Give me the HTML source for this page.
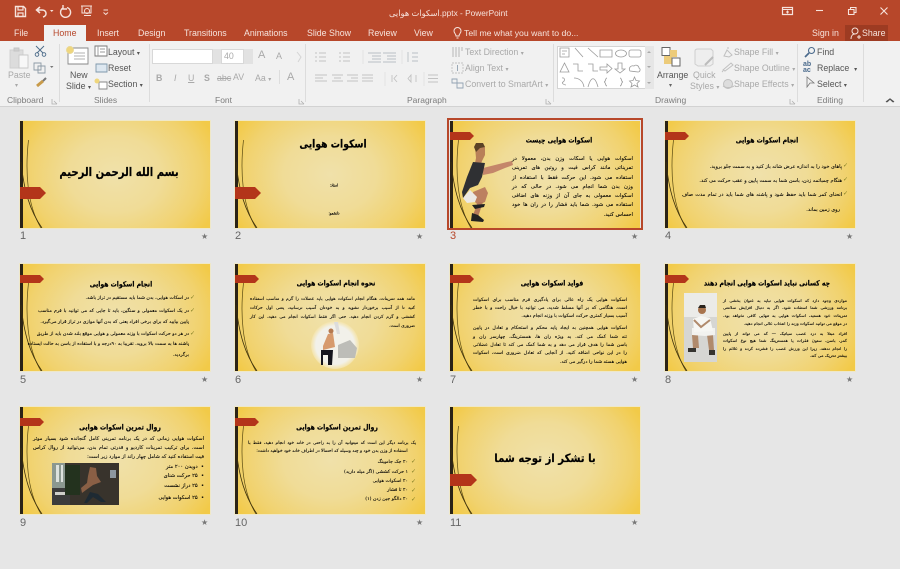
<!DOCTYPE html>
<html lang="en"><head><meta charset="utf-8"><title>PowerPoint</title>
<style>
html,body{margin:0;padding:0}
body{width:900px;height:569px;overflow:hidden;background:#e6e6e6;position:relative;font-family:"Liberation Sans",sans-serif}
#p{position:absolute;left:0;top:0;width:900px;height:569px;filter:blur(.35px)}
.a{position:absolute}
.t{position:absolute;white-space:nowrap;font-size:8.800px;line-height:11px;color:#7c7c7c}
.w{color:#f6e3dc}
.g{color:#a9a9a9}
.k{color:#555}
.i{position:absolute;overflow:visible}
.s{position:absolute;width:190px;height:107px;overflow:hidden;background:radial-gradient(ellipse 58% 84% at 50% 50%,#f0e1aa 0,#f0dc97 42%,#f1d26e 78%,#f2ca48 100%);box-shadow:0 0 0 1px #efe8c8}
.s svg.b{position:absolute;left:0;top:0}
.h,.l{position:absolute;direction:rtl;white-space:nowrap;font-family:"DejaVu Sans",sans-serif;color:#000}
.h{font-weight:bold;text-align:center;transform:translate(-50%,-50%) scaleX(.84);-webkit-text-stroke:.2px #000}
.l{font-size:4.700px;line-height:6px;text-align:justify;text-align-last:justify;-webkit-text-stroke:.1px #000}
.r{text-align-last:right;text-align:right}
.c{text-align-last:center;text-align:center}
.n{position:absolute;font-size:11px;line-height:13px;color:#666}
.st{position:absolute;font-size:8px;line-height:10px;color:#777;font-family:"DejaVu Sans",sans-serif}
.ck{position:absolute;font-family:"DejaVu Sans",sans-serif;font-size:6px;line-height:6px;color:#7d7a20}
</style></head><body><div id="p">
<!-- title bar -->
<div class="a" style="left:0;top:0;width:900px;height:41px;background:#b7472a"></div>
<div class="a" style="left:44px;top:25px;width:42px;height:16px;background:#f1f1f1"></div>
<div class="a" style="left:845px;top:25px;width:43px;height:16px;background:#9d3b22"></div>
<!-- QAT -->
<svg class="i" style="left:0;top:0" width="120" height="20" fill="none" stroke="#f6e3dc" stroke-width="1.200">
<path d="M15.500 6.500h8l2 2v8h-10z" stroke-width="1.400"/><path d="M18 7v3h5V7M18 16v-3h5v3"/>
<path d="M40 7l-3.500 3 3.500 3M37 10h5c3 0 4 2 4 3.500s-1 3-3 3.500" stroke-width="1.500"/><path d="M50 10h3.500l-1.750 2z" fill="#f6e3dc" stroke="none"/>
<path d="M67 7.500a5 5 0 1 1-4 .5M63 5v4h4" stroke-width="1.400"/>
<path d="M81 6h11M82 6v7h9V6M84 15.500h7" stroke-width="1"/><circle cx="87" cy="11" r="2.500" stroke-width="1"/>
<path d="M103.500 10h4.500M103.500 12.500l2.250 2 2.250-2" stroke-width="1"/>
</svg>
<div class="t w" style="left:389px;top:8px;font-size:8.300px;font-family:'Liberation Sans','DejaVu Sans',sans-serif">اسکوات هوایی.pptx - PowerPoint</div>
<!-- window controls -->
<svg class="i" style="left:780px;top:0" width="120" height="20" fill="none" stroke="#f6e3dc" stroke-width="1.100">
<path d="M2.500 7.500h10v7h-10z" stroke-width="1.200"/><path d="M2.500 9.500h10M7.500 10.500v3M6 12h3"/>
<path d="M36 10.500h7"/><path d="M68.500 9.500h5.500v5h-5.500zM70.500 9.500v-2h5.500v5h-2"/><path d="M100.500 7.500l7 7M107.500 7.500l-7 7"/>
</svg>
<!-- tabs -->
<div class="t w" style="left:14px;top:28px">File</div>
<div class="t" style="left:53px;top:28px;color:#b7472a">Home</div>
<div class="t w" style="left:97px;top:28px">Insert</div>
<div class="t w" style="left:138px;top:28px">Design</div>
<div class="t w" style="left:184px;top:28px">Transitions</div>
<div class="t w" style="left:244px;top:28px">Animations</div>
<div class="t w" style="left:307px;top:28px">Slide Show</div>
<div class="t w" style="left:368px;top:28px">Review</div>
<div class="t w" style="left:414px;top:28px">View</div>
<svg class="i" style="left:452px;top:27px" width="12" height="13" fill="none" stroke="#f6e3dc"><path d="M4 9c0-2-2-3-2-5a3.500 3.500 0 0 1 7 0c0 2-2 3-2 5zM4.500 11h2"/></svg>
<div class="t w" style="left:464px;top:28px;font-size:8.700px">Tell me what you want to do...</div>
<div class="t w" style="left:812px;top:28px">Sign in</div>
<svg class="i" style="left:850px;top:27px" width="12" height="13" fill="none" stroke="#f6e3dc" stroke-width="1"><circle cx="5" cy="4" r="3"/><path d="M1 12c0-3 1.500-5 4-5M7 10h4M9 8v4"/></svg>
<div class="t w" style="left:862px;top:28px">Share</div>
<!-- ribbon -->
<div class="a" style="left:0;top:41px;width:900px;height:65px;background:#f1f1f1;border-bottom:1px solid #d2d2d2"></div>
<div class="a" style="left:59px;top:44px;width:1px;height:58px;background:#dcdcdc"></div>
<div class="a" style="left:149px;top:44px;width:1px;height:58px;background:#dcdcdc"></div>
<div class="a" style="left:305px;top:44px;width:1px;height:58px;background:#dcdcdc"></div>
<div class="a" style="left:553px;top:44px;width:1px;height:58px;background:#dcdcdc"></div>
<div class="a" style="left:797px;top:44px;width:1px;height:58px;background:#dcdcdc"></div>
<div class="a" style="left:863px;top:44px;width:1px;height:58px;background:#dcdcdc"></div>
<!-- clipboard + slides icons -->
<svg class="i" style="left:0;top:0" width="150" height="95" fill="none" stroke="#888" stroke-width=".9">
<path d="M10 50h13v18H10z" fill="#dcdcdc" stroke="#cfcfcf"/><path d="M14 48h5v3h-5z" fill="#cfcfcf" stroke="#c4c4c4"/><path d="M19 55h9v13h-9z" fill="#f7f7f7" stroke="#c8c8c8"/>
<path d="M36 46l7 7M44 46l-7 7" stroke="#4a6a88"/><circle cx="37" cy="54.500" r="1.800" stroke="#4a6a88"/><circle cx="44" cy="54.500" r="1.800" stroke="#4a6a88"/>
<path d="M34 63h7v7h-7zM38 66h7v7h-7z" stroke="#8d9aa6"/><path d="M50 66h3.500l-1.750 2z" fill="#777" stroke="none"/>
<path d="M43 81l-6 5" stroke="#c89b4a" stroke-width="3"/><path d="M43 81l3-3" stroke="#777" stroke-width="2"/>
<path d="M68 48h20v16H68z" fill="#fff" stroke="#888"/><path d="M74 53h11M74 56h11M74 59h11" stroke="#b2b2b2"/><circle cx="70" cy="50" r="3.500" fill="#efd67c" stroke="#e9d793"/>
<path d="M95 46h12v10H95z" fill="#fff" stroke="#777"/><path d="M98 46v10M100 49h5M100 52h5" stroke="#999"/>
<path d="M96 64h11v8H96z" fill="#dde7f0" stroke="#7f98ab"/>
<path d="M99 82h8v7h-8z" fill="#fff" stroke="#888"/><circle cx="97" cy="81" r="2.500" fill="#efd67c" stroke="none"/>
</svg>
<div class="t g" style="left:8px;top:70px">Paste</div>
<div class="t g" style="left:15px;top:81px;font-size:6px">▾</div>
<div class="t k" style="left:70px;top:70px">New</div>
<div class="t k" style="left:66px;top:81px">Slide <span style="font-size:6px">▾</span></div>
<div class="t k" style="left:108px;top:47px">Layout <span style="font-size:6px">▾</span></div>
<div class="t k" style="left:108px;top:63px">Reset</div>
<div class="t k" style="left:108px;top:79px">Section <span style="font-size:6px">▾</span></div>
<div class="t" style="left:7px;top:95px;font-size:8.500px">Clipboard</div>
<div class="t" style="left:94px;top:95px;font-size:8.500px">Slides</div>
<div class="t" style="left:215px;top:95px;font-size:8.500px">Font</div>
<div class="t" style="left:407px;top:95px;font-size:8.500px">Paragraph</div>
<div class="t" style="left:655px;top:95px;font-size:8.500px">Drawing</div>
<div class="t" style="left:817px;top:95px;font-size:8.500px">Editing</div>
<svg class="i" style="left:0;top:95px" width="900" height="11" fill="none" stroke="#b0b0b0" stroke-width=".8">
<path d="M52 4v5h5M54 6l3 3M299 4v5h5M301 6l3 3M546 4v5h5M548 6l3 3M790 4v5h5M792 6l3 3"/>
<path d="M887 7l3-3 3 3" stroke="#555" stroke-width="1.100"/>
</svg>
<!-- font -->
<div class="a" style="left:152px;top:49px;width:61px;height:15px;background:#fff;border:1px solid #d8d8d8;box-sizing:border-box"></div>
<div class="a" style="left:213px;top:49px;width:8px;height:15px;background:#e2e2e2"></div>
<div class="a" style="left:221px;top:49px;width:23px;height:15px;background:#fff;border:1px solid #d8d8d8;box-sizing:border-box"></div>
<div class="a" style="left:244px;top:49px;width:9px;height:15px;background:#e2e2e2"></div>
<div class="t g" style="left:224px;top:51px">40</div>
<div class="t g" style="left:258px;top:50px;font-size:11px">A</div>
<div class="t g" style="left:276px;top:51px;font-size:9px">A</div>
<div class="t g" style="left:156px;top:73px;font-weight:bold">B</div>
<div class="t g" style="left:174px;top:73px;font-style:italic">I</div>
<div class="t g" style="left:188px;top:73px;text-decoration:underline">U</div>
<div class="t g" style="left:204px;top:73px;font-weight:bold">S</div>
<div class="t g" style="left:217px;top:73px;text-decoration:line-through">abc</div>
<div class="t g" style="left:233px;top:72px">AV</div>
<div class="t g" style="left:255px;top:73px">Aa <span style="font-size:6px">▾</span></div>
<div class="t g" style="left:287px;top:72px;font-size:11px">A</div>
<div class="a" style="left:279px;top:70px;width:1px;height:14px;background:#ddd"></div>
<svg class="i" style="left:296px;top:50px" width="8" height="14" fill="none" stroke="#d4d4d4"><path d="M1 2l4 5-3 5"/></svg>
<!-- paragraph icons -->
<svg class="i" style="left:300px;top:0" width="170" height="95" fill="none" stroke="#c2c2c2" stroke-width=".9">
<path d="M15 53h2M15 57h2M15 61h2M19 53h7M19 57h7M19 61h7M39 53h2M39 57h2M39 61h2M43 53h7M43 57h7M43 61h7"/>
<path d="M68 53h13M72 56h9M72 59h9M68 62h13M83 53h13M87 56h9M87 59h9M83 62h13M112 53h6M112 57h6M112 61h6M108 52v10" stroke="#b9c0c5"/>
<path d="M15 75h12M15 78h8M15 81h12M32 75h11M34 78h7M32 81h11M47 75h11M51 78h7M47 81h11M62 75h11M62 78h11M62 81h11"/>
<path d="M92 75v7M97 75l-3 3.500 3 3.500M108 78.500l3-3.500v7zM116 75v7M128 75h10M128 78.500h10M128 82h10"/>
<path d="M63 50v14M102 50v14M85 72v14M124 72v14" stroke="#e0e0e0"/>
<path d="M153 47v10M156 47v10M159 47v10M162 47v4" stroke="#b0b0b0"/>
<path d="M152 63h11v10h-11z" stroke-dasharray="2 1"/><path d="M157.500 65v6" stroke="#8fa0b0"/>
<path d="M152 79h5v4h-5zM157 83h6v5h-6z" stroke="#93a3b3"/>
</svg>
<div class="t g" style="left:465px;top:47px">Text Direction <span style="font-size:6px">▾</span></div>
<div class="t g" style="left:465px;top:63px">Align Text <span style="font-size:6px">▾</span></div>
<div class="t g" style="left:465px;top:79px">Convert to SmartArt <span style="font-size:6px">▾</span></div>
<!-- shapes gallery -->
<div class="a" style="left:557px;top:46px;width:97px;height:43px;background:#fff;border:1px solid #d4d4d4;box-sizing:border-box"></div>
<div class="a" style="left:645px;top:46px;width:9px;height:43px;background:#e6e6e6"></div>
<svg class="i" style="left:557px;top:46px" width="100" height="44" fill="none" stroke="#9a9a9a" stroke-width=".8">
<path d="M3 2h9v9H3zM5 5h5M5 8h3M18 2l8 9M31 2l10 9M43 4h12v7H43z"/><ellipse cx="64" cy="7.500" rx="5.500" ry="3.500"/><rect x="72" y="4" width="12" height="7" rx="2"/>
<path d="M3 26l4.500-9 4.500 9zM16 18h5v7h5M31 18h5v7h5M43 21h7v-3l5 4.500-5 4.500v-3h-7zM61 17v6h-3l5 4 5-4h-3v-6zM73 25c-2-3 1-6 4-5 2-2 5 0 5 2 2 1 1 4-1 4z"/>
<path d="M5 32c3-1 3 3 1 4s1 3 3 3M17 32c5 0 9 3 10 9M31 41c3-11 7-11 10 0M50 32c-2 0-1 4-3 4 2 0 1 4 3 4M63 32c2 0 1 4 3 4-2 0-1 4-3 4M77.500 31l1.500 3.500 3.500.5-2.500 2.500 1 3.500-3.500-2-3.500 2 1-3.500-2.500-2.500 3.500-.5z"/>
<path d="M92 5l-2 2h4zM90 20h4l-2 2zM90 36h4l-2 2z" fill="#aaa" stroke="none"/>
</svg>
<!-- arrange -->
<svg class="i" style="left:660px;top:46px" width="24" height="24"><rect x="2" y="1.500" width="8" height="8" fill="#fff" stroke="#666"/><rect x="10" y="4" width="7" height="7" fill="#eccb7a"/><rect x="4" y="10" width="8" height="8" fill="#eccb7a"/><rect x="12" y="12" width="8" height="8" fill="#fff" stroke="#666"/></svg>
<div class="t k" style="left:657px;top:70px">Arrange</div>
<div class="t" style="left:669px;top:81px;font-size:6px;color:#666">▾</div>
<svg class="i" style="left:693px;top:47px" width="24" height="22" fill="none" stroke="#cfcfcf"><path d="M2 4c0-2 2-2 3-2h13l2 2v13l-3 2H5l-3-2z" fill="#eee"/><path d="M20 10l-8 8" stroke="#bcbcbc" stroke-width="2"/></svg>
<div class="t g" style="left:693px;top:70px">Quick</div>
<div class="t g" style="left:690px;top:81px">Styles <span style="font-size:6px">▾</span></div>
<svg class="i" style="left:721px;top:45px" width="14" height="46" fill="none" stroke="#c0c0c0"><path d="M3 11l3-6 5 5-3 2zM6 3h2"/><path d="M2 25l8-7 2 2-8 6zM2 26l-1 1"/><circle cx="7" cy="39" r="4.500" fill="#ddd"/><path d="M2 41c3 2 8 2 11 0"/></svg>
<div class="t g" style="left:734px;top:47px">Shape Fill <span style="font-size:6px">▾</span></div>
<div class="t g" style="left:734px;top:63px">Shape Outline <span style="font-size:6px">▾</span></div>
<div class="t g" style="left:734px;top:79px">Shape Effects <span style="font-size:6px">▾</span></div>
<!-- editing -->
<svg class="i" style="left:803px;top:46px" width="14" height="44" fill="none" stroke="#4a6a8c" stroke-width="1.100"><circle cx="8.500" cy="4.500" r="3"/><path d="M6 7l-4 4" stroke-width="1.700"/><path d="M4 41V31l7 6H7z" stroke="#777" stroke-width=".8"/></svg>
<div class="t" style="left:803px;top:62px;font-size:7px;line-height:6px;color:#4a6a8c;font-weight:bold">ab<br>ac</div>
<div class="t k" style="left:817px;top:47px">Find</div>
<div class="t k" style="left:817px;top:63px">Replace &nbsp;<span style="font-size:6px">▾</span></div>
<div class="t k" style="left:817px;top:79px">Select <span style="font-size:6px">▾</span></div>
<svg class="i" style="left:885px;top:97px" width="10" height="7" fill="none" stroke="#555" stroke-width="1.200"><path d="M1 5l4-3 4 3"/></svg>

<svg width="0" height="0" class="a"><defs>
<g id="deco" fill="none"><rect width="3" height="107" fill="#2b2316" stroke="none"/>
<path d="M8.500 19C5 50 7 84 21 107" stroke="#5a4a10" stroke-width=".7"/><path d="M1 41C4 70 10 90 22 107" stroke="#3c2f0a" stroke-width=".8"/></g>
</defs></svg>

<!-- selection slide 3 -->
<div class="a" style="left:447px;top:118px;width:196px;height:112px;border:2px solid #b7472a;box-sizing:border-box"></div>

<!-- 1 -->
<div class="s" style="left:20px;top:121px"><svg class="b" width="190" height="107"><use href="#deco"/><path d="M0 66H20l6 6-6 6H0z" fill="#b3351a"/></svg>
<div class="h" style="left:99px;top:51px;font-size:12px">بسم الله الرحمن الرحیم</div></div>
<!-- 2 -->
<div class="s" style="left:235px;top:121px"><svg class="b" width="190" height="107"><use href="#deco"/><path d="M0 66H20l6 6-6 6H0z" fill="#b3351a"/></svg>
<div class="h" style="left:98px;top:23px;font-size:11px">اسکوات هوایی</div>
<div class="h" style="left:99px;top:64px;font-size:3.800px;font-weight:normal">استاد:</div>
<div class="h" style="left:99px;top:92px;font-size:3.800px;font-weight:normal">دانشجو:</div></div>
<!-- 3 -->
<div class="s" style="left:450px;top:121px;box-shadow:none"><svg class="b" width="190" height="107"><use href="#deco"/><path d="M0 11H20l4 4-4 4H0z" fill="#b3351a"/>
<path d="M25 26h10v8l-3 6-1 3-6-1 1-5z" fill="#b98058"/><path d="M24 26l2-4h7l2 4-5 1-4 4z" fill="#5a4226"/>
<path d="M33 47L57 41l5-1 1 4-8 3-12 5-10 2z" fill="#c4866a"/>
<path d="M23 71l12-5 3 6-3 9-7 3-5-5z" fill="#bd8060"/>
<path d="M28 81h5l-5 15-5-2z" fill="#b57a5a"/>
<path d="M13 77l7-8 7 7-2 5-8 1z" fill="#ece9e4"/>
<path d="M23 41l12 1-3 14-4 8-8 3-7 10-1-6 5-15z" fill="#2f3033"/>
<path d="M22 84l13-1-1 3-9 2zM22 92l6 2 6 5-1 2-12-1z" fill="#222"/>
</svg>
<div class="h" style="left:109px;top:19px;font-size:7.300px">اسکوات هوایی چیست</div>
<div class="l" style="left:62px;width:121px;top:35px;font-size:5.300px">اسکوات هوایی یا اسکات وزن بدن، معمولا در</div>
<div class="l" style="left:62px;width:121px;top:44px;font-size:5.300px">تمریناتی مانند کراس فیت و روتین های تمرینی</div>
<div class="l" style="left:62px;width:121px;top:54px;font-size:5.300px">استفاده می شود. این حرکت فقط با استفاده از</div>
<div class="l" style="left:62px;width:121px;top:63px;font-size:5.300px">وزن بدن شما انجام می شود. در حالی که در</div>
<div class="l" style="left:62px;width:121px;top:72px;font-size:5.300px">اسکوات معمولی به جای آن از وزنه های اضافی</div>
<div class="l" style="left:62px;width:121px;top:81px;font-size:5.300px">استفاده می شود. شما باید فشار را در ران ها خود</div>
<div class="l r" style="left:62px;width:121px;top:91px;font-size:5.300px">احساس کنید.</div></div>
<!-- 4 -->
<div class="s" style="left:665px;top:121px"><svg class="b" width="190" height="107"><use href="#deco"/><path d="M0 11H20l4 4-4 4H0z" fill="#b3351a"/></svg>
<div class="h" style="left:102px;top:19px;font-size:7.300px">انجام اسکوات هوایی</div>
<div class="ck" style="left:178px;top:42px">✓</div><div class="l r" style="left:20px;width:157px;top:43px;font-size:5px">پاهای خود را به اندازه عرض شانه باز کنید و به سمت جلو بروید.</div>
<div class="ck" style="left:178px;top:56px">✓</div><div class="l r" style="left:20px;width:157px;top:57px;font-size:5px">هنگام چمباتمه زدن، باسن شما به سمت پایین و عقب حرکت می کند.</div>
<div class="ck" style="left:178px;top:70px">✓</div><div class="l" style="left:17px;width:160px;top:71px;font-size:5px">انحنای کمر شما باید حفظ شود و پاشنه های شما باید در تمام مدت صاف</div>
<div class="l r" style="left:30px;width:145px;top:86px;font-size:5px">روی زمین بماند.</div></div>
<!-- 5 -->
<div class="s" style="left:20px;top:264px"><svg class="b" width="190" height="107"><use href="#deco"/><path d="M0 11H20l4 4-4 4H0z" fill="#b3351a"/></svg>
<div class="h" style="left:101px;top:20px;font-size:7.300px">انجام اسکوات هوایی</div>
<div class="ck" style="left:170px;top:31px">✓</div><div class="l r" style="left:18px;width:151px;top:32px;font-size:4.700px">در اسکات هوایی، بدن شما باید مستقیم در تراز باشد.</div>
<div class="ck" style="left:170px;top:44px">✓</div><div class="l" style="left:18px;width:151px;top:45px;font-size:4.700px">در یک اسکوات معمولی و سنگین، باید تا جایی که می توانید با فرم مناسب</div>
<div class="l r" style="left:18px;width:151px;top:56px;font-size:4.700px">پایین بیایید که برای برخی افراد یعنی که بدن آنها موازی در تراز قرار می‌گیرد.</div>
<div class="ck" style="left:170px;top:67px">✓</div><div class="l" style="left:18px;width:151px;top:68px;font-size:4.700px">در هر دو حرکت اسکوات با وزنه معمولی و هوایی موقع بلند شدن باید از طریق</div>
<div class="l" style="left:18px;width:151px;top:78px;font-size:4.700px">پاشنه ها به سمت بالا بروید. تقریبا به ۹۰درجه و با استفاده از باسن به حالت ایستاده</div>
<div class="l r" style="left:18px;width:151px;top:89px;font-size:4.700px">برگردید.</div></div>
<!-- 6 -->
<div class="s" style="left:235px;top:264px"><svg class="b" width="190" height="107"><use href="#deco"/><path d="M0 11H20l4 4-4 4H0z" fill="#b3351a"/>
<defs><radialGradient id="wc"><stop offset=".8" stop-color="#f2f1ea"/><stop offset="1" stop-color="#f4e3a8"/></radialGradient></defs>
<circle cx="100" cy="81" r="24" fill="url(#wc)"/><path d="M99 58h4l2 12h-3z" fill="#dcdcdc"/><path d="M103 81l12-5 7 8-2 10h-17z" fill="#bdbdb8"/>
<path d="M93 70l5-1 2 14-12 3v-4z" fill="#d79a6c"/><circle cx="96" cy="67" r="2.500" fill="#b5794f"/>
<path d="M86 86h12l-1 15h-4V91h-5v10h-2z" fill="#15151d"/>
</svg>
<div class="h" style="left:101px;top:19px;font-size:7.300px">نحوه انجام اسکوات هوایی</div>
<div class="l" style="left:15px;width:165px;top:33px;font-size:4.400px">مانند همه تمرینات، هنگام انجام اسکوات هوایی باید عضلات را گرم و مناسب استفاده</div>
<div class="l" style="left:15px;width:165px;top:42px;font-size:4.400px">کنید تا از آسیب برخوردار نشوید و به خودتان آسیب نرسانید، یعنی اول حرکات</div>
<div class="l" style="left:15px;width:165px;top:51px;font-size:4.400px">کششی و گرم کردن انجام دهید. حتی اگر فقط اسکوات انجام می دهید، این کار</div>
<div class="l r" style="left:15px;width:165px;top:60px;font-size:4.400px">ضروری است.</div></div>
<!-- 7 -->
<div class="s" style="left:450px;top:264px"><svg class="b" width="190" height="107"><use href="#deco"/><path d="M0 11H20l4 4-4 4H0z" fill="#b3351a"/></svg>
<div class="h" style="left:102px;top:19px;font-size:7.300px">فواید اسکوات هوایی</div>
<div class="l" style="left:23px;width:154px;top:34px;font-size:4.700px">اسکوات هوایی یک راه عالی برای یادگیری فرم مناسب برای اسکوات</div>
<div class="l" style="left:23px;width:154px;top:42px;font-size:4.700px">است. هنگامی که بر آنها مسلط شدید، می توانید با خیال راحت و با خطر</div>
<div class="l r" style="left:23px;width:154px;top:50px;font-size:4.700px">آسیب بسیار کمتری حرکت اسکوات با وزنه انجام دهید.</div>
<div class="l" style="left:23px;width:154px;top:62px;font-size:4.700px">اسکوات هوایی همچنین به ایجاد پایه محکم و استحکام و تعادل در پایین</div>
<div class="l" style="left:23px;width:154px;top:71px;font-size:4.700px">تنه شما کمک می کند. به ویژه ران ها، همسترینگ، چهارسر ران و</div>
<div class="l" style="left:23px;width:154px;top:79px;font-size:4.700px">باسن شما را هدف قرار می دهد و به شما کمک می کند تا تعادل عضلانی</div>
<div class="l" style="left:23px;width:154px;top:87px;font-size:4.700px">را در این نواحی اضافه کنید. از آنجایی که تعادل ضروری است، اسکوات</div>
<div class="l r" style="left:23px;width:154px;top:96px;font-size:4.700px">هوایی هسته شما را درگیر می کند.</div></div>
<!-- 8 -->
<div class="s" style="left:665px;top:264px"><svg class="b" width="190" height="107"><use href="#deco"/><path d="M0 11H20l4 4-4 4H0z" fill="#b3351a"/>
<rect x="19" y="29" width="33" height="69" fill="#d6d6d3"/><path d="M19 29h33v24H19z" fill="#ebebe8"/>
<path d="M27 71h6l1 13h-6zM42 71h6l1 15h-5z" fill="#b08a6c"/><path d="M23 84h8v4h-8zM44 86h6v5h-6z" fill="#35332f"/>
<path d="M27 64l23 0 0 7-10 1-13-1z" fill="#f2f2ef"/>
<path d="M28 55l8-3 9 2 3 13-19 1z" fill="#f6f6f3"/><path d="M29 56l7 7 9-7" stroke="#b08a6c" stroke-width="2" fill="none"/>
<circle cx="37" cy="46" r="4" fill="#a8744e"/><path d="M33 44l2-3h5l1 3z" fill="#2a241e"/></svg>
<div class="h" style="left:102px;top:19px;font-size:7.300px">چه کسانی نباید اسکوات هوایی انجام دهند</div>
<div class="l" style="left:58px;width:124px;top:34px;font-size:4.200px">مواردی وجود دارد که اسکوات هوایی نباید به عنوان بخشی از</div>
<div class="l" style="left:58px;width:124px;top:41px;font-size:4.200px">برنامه ورزشی شما استفاده شود. اگر به دنبال افزایش سلامتی</div>
<div class="l" style="left:58px;width:124px;top:49px;font-size:4.200px">تمرینات خود هستید، اسکوات هوایی به تنهایی کافی نخواهد بود.</div>
<div class="l r" style="left:58px;width:124px;top:57px;font-size:4.200px">در موقع می توانید اسکوات وزنه را انتخاب عالی انجام دهید.</div>
<div class="l" style="left:58px;width:124px;top:67px;font-size:4.200px">افراد مبتلا به درد عصب سیاتیک — که می تواند از پایین</div>
<div class="l" style="left:58px;width:124px;top:74px;font-size:4.200px">کمر، باسن، ستون فقرات یا همسترینگ شما هیچ نوع اسکوات</div>
<div class="l" style="left:58px;width:124px;top:82px;font-size:4.200px">را انجام ندهند. زیرا این ورزش عصب را فشرده کرده و علائم را</div>
<div class="l r" style="left:58px;width:124px;top:89px;font-size:4.200px">بیشتر تحریک می کند.</div></div>
<!-- 9 -->
<div class="s" style="left:20px;top:407px"><svg class="b" width="190" height="107"><use href="#deco"/><path d="M0 11H20l4 4-4 4H0z" fill="#b3351a"/>
<rect x="32" y="56" width="67" height="42" fill="#38332c"/><path d="M32 56h13v25H32z" fill="#8b9890"/><path d="M36 58h3v17h-3zM41 58h2v17h-2z" fill="#dde2de"/><path d="M32 81h18v17H32z" fill="#3c3c3c"/><path d="M35 85h15l-2 3H35z" fill="#cfcfca"/><path d="M45 58h15v30H45z" fill="#23321e"/><path d="M90 63h6v8h-6z" fill="#8d97a0"/><path d="M70 60l6 1 1 8 4 6-8 3-7 5-4 3-1-5 6-5 1-7z" fill="#8a5f45"/><path d="M70 85l8 2 8 8h-5l-8-5-6 6h-3z" fill="#1e2a33"/></svg>
<div class="h" style="left:100px;top:20px;font-size:7.300px">روال تمرین اسکوات هوایی</div>
<div class="l" style="left:13px;width:171px;top:29px;font-size:5px">اسکوات هوایی زمانی که در یک برنامه تمرینی کامل گنجانده شود بسیار موثر</div>
<div class="l" style="left:13px;width:171px;top:38px;font-size:5px">است. برای ترکیب تمرینات کاردیو و قدرتی تمام بدن، می‌توانید از روال کراس</div>
<div class="l r" style="left:13px;width:171px;top:47px;font-size:5px">فیت استفاده کنید که شامل چهار راند از موارد زیر است:</div>
<div class="l r" style="left:100px;width:84px;top:57px;font-size:5.200px">• &nbsp;دویدن ۲۰۰ متر</div>
<div class="l r" style="left:100px;width:84px;top:66px;font-size:5.200px">• &nbsp;۲۵ حرکت شنای</div>
<div class="l r" style="left:100px;width:84px;top:76px;font-size:5.200px">• &nbsp;۲۵ دراز نشست</div>
<div class="l r" style="left:100px;width:84px;top:88px;font-size:5.200px">• &nbsp;۲۵ اسکوات هوایی</div></div>
<!-- 10 -->
<div class="s" style="left:235px;top:407px"><svg class="b" width="190" height="107"><use href="#deco"/><path d="M0 11H20l4 4-4 4H0z" fill="#b3351a"/></svg>
<div class="h" style="left:102px;top:20px;font-size:7.300px">روال تمرین اسکوات هوایی</div>
<div class="l" style="left:13px;width:168px;top:34px;font-size:4.400px">یک برنامه دیگر این است که میتوانید آن را به راحتی در خانه خود انجام دهید، فقط با</div>
<div class="l c" style="left:13px;width:168px;top:42px;font-size:4.400px">استفاده از وزن بدن خود و چند وسیله که احتمالا در اطراف خانه خود خواهید داشت:</div>
<div class="ck" style="left:176px;top:52px">✓</div><div class="l r" style="left:40px;width:133px;top:53px;font-size:4.700px">۲۰ جک جامپینگ</div>
<div class="ck" style="left:176px;top:62px">✓</div><div class="l r" style="left:40px;width:133px;top:63px;font-size:4.700px">۱ حرکت کششی (اگر میله دارید)</div>
<div class="ck" style="left:176px;top:72px">✓</div><div class="l r" style="left:40px;width:133px;top:72px;font-size:4.700px">۲۰ اسکوات هوایی</div>
<div class="ck" style="left:176px;top:81px">✓</div><div class="l r" style="left:40px;width:133px;top:81px;font-size:4.700px">۲۰ تا فشار</div>
<div class="ck" style="left:176px;top:90px">✓</div><div class="l r" style="left:40px;width:133px;top:90px;font-size:4.700px">۲۰ دالگو جین زدن (۱)</div></div>
<!-- 11 -->
<div class="s" style="left:450px;top:407px"><svg class="b" width="190" height="107"><use href="#deco"/><path d="M0 67H21l6 6-6 6H0z" fill="#b3351a"/></svg>
<div class="h" style="left:95px;top:51px;font-size:11.500px;transform:translate(-50%,-50%) scaleX(.88)">با تشکر از توجه شما</div></div>

<!-- numbers -->
<div class="n" style="left:20px;top:230px">1</div><div class="st" style="left:201px;top:232px">★</div>
<div class="n" style="left:235px;top:230px">2</div><div class="st" style="left:416px;top:232px">★</div>
<div class="n" style="left:450px;top:230px;color:#b7472a">3</div><div class="st" style="left:631px;top:232px">★</div>
<div class="n" style="left:665px;top:230px">4</div><div class="st" style="left:846px;top:232px">★</div>
<div class="n" style="left:20px;top:374px">5</div><div class="st" style="left:201px;top:375px">★</div>
<div class="n" style="left:235px;top:374px">6</div><div class="st" style="left:416px;top:375px">★</div>
<div class="n" style="left:450px;top:374px">7</div><div class="st" style="left:631px;top:375px">★</div>
<div class="n" style="left:665px;top:374px">8</div><div class="st" style="left:846px;top:375px">★</div>
<div class="n" style="left:20px;top:517px">9</div><div class="st" style="left:201px;top:518px">★</div>
<div class="n" style="left:235px;top:517px">10</div><div class="st" style="left:416px;top:518px">★</div>
<div class="n" style="left:450px;top:517px">11</div><div class="st" style="left:631px;top:518px">★</div>
</div></body></html>
